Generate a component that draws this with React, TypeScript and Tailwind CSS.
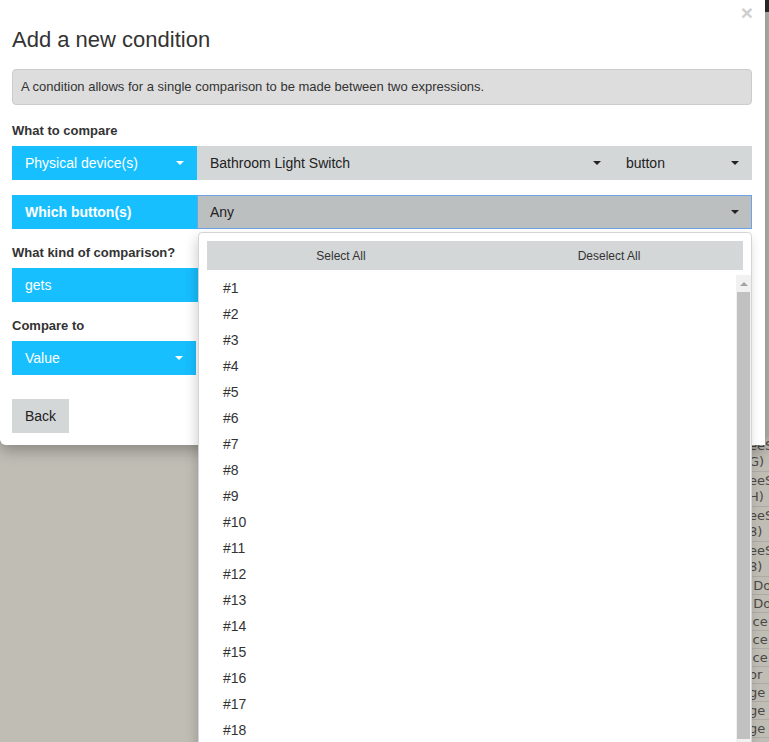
import React from 'react';

const buttonOptions = Array.from({ length: 18 }, (_, i) => `#${i + 1}`);

// fragments of the page underneath the modal, peeking out at the right edge
const behindCells = [
  { lines: ['eeS', 'G)'], h: 'h-[35px]' },
  { lines: ['eeS', 'H)'], h: 'h-[35px]' },
  { lines: ['eeS', '8)'], h: 'h-[35px]' },
  { lines: ['eeS', '8)'], h: 'h-[35px]' },
  { lines: ['\u00a0Do'], h: 'h-[18px]' },
  { lines: ['\u00a0Do'], h: 'h-[18px]' },
  { lines: ['ice'], h: 'h-[18px]' },
  { lines: ['ice'], h: 'h-[18px]' },
  { lines: ['ice'], h: 'h-[18px]' },
  { lines: ['or'], h: 'h-[17px]' },
  { lines: ['ge'], h: 'h-[18px]' },
  { lines: ['ge'], h: 'h-[18px]' },
  { lines: ['ge'], h: 'h-[18px]' },
];

function Caret({ white }: { white?: boolean }) {
  return (
    <span
      className={`inline-block h-0 w-0 border-x-[4px] border-t-[4px] border-x-transparent ${
        white ? 'border-t-white' : 'border-t-[#222]'
      }`}
    />
  );
}

export default function App() {
  return (
    <div className="relative flex h-[742px] w-full overflow-hidden bg-[#c0bdb5] font-['Liberation_Sans',Arial,sans-serif]">
      <div className="flex-1" />

      {/* underlying page, dimmed by the backdrop */}
      <div className="flex w-[17px] flex-col overflow-hidden font-['DejaVu_Sans',sans-serif] text-[13px] text-[#4b4a47]">
        <div className="h-[12px] shrink-0 bg-[#2a2a2a]" />
        <div className="h-[425px] shrink-0 bg-[#b9b7b1]" />
        {behindCells.map((cell, i) => (
          <div
            key={i}
            className={`flex ${cell.h} shrink-0 flex-col justify-center border-b border-[#adaba5] leading-[16px] -ml-[3px] whitespace-nowrap`}
          >
            {cell.lines.map((l, j) => (
              <span key={j}>{l}</span>
            ))}
          </div>
        ))}
      </div>

      {/* Modal */}
      <div className="absolute left-0 top-0 h-[445px] w-[765px] rounded-bl-[6px] bg-white pl-[12px] pr-[13px] text-[#333] shadow-[0_5px_15px_rgba(0,0,0,0.3)]">
        <button className="absolute right-[12px] top-[2px] text-[21px] font-bold leading-[21px] text-[#cfcfcf]">
          ×
        </button>

        <h4 className="pt-[28px] text-[22px] leading-[24px]">Add a new condition</h4>

        <div className="mt-[17px] flex h-[36px] items-center rounded-[4px] border border-[#cccccc] bg-[#dddddd] pl-[8px] text-[13px]">
          A condition allows for a single comparison to be made between two expressions.
        </div>

        <div className="mt-[17px] text-[13px] font-bold leading-[18px]">What to compare</div>
        <div className="mt-[6px] flex h-[34px] text-[14px]">
          <div className="flex w-[185px] items-center justify-between bg-[#17bfff] px-[13px] text-white">
            <span>Physical device(s)</span>
            <Caret white />
          </div>
          <div className="flex w-[416px] items-center justify-between bg-[#d4d7d8] pl-[13px] pr-[12px] text-[#222]">
            <span>Bathroom Light Switch</span>
            <Caret />
          </div>
          <div className="flex flex-1 items-center justify-between bg-[#d4d7d8] px-[13px] text-[#222]">
            <span>button</span>
            <Caret />
          </div>
        </div>

        <div className="mt-[15px] flex h-[34px] text-[14px]">
          <div className="flex w-[185px] items-center bg-[#17bfff] px-[13px] font-bold text-white">
            Which button(s)
          </div>
          <div className="relative flex flex-1">
            <div className="flex flex-1 items-center justify-between border border-[#6fa3e8] bg-[#bcbfc0] pl-[12px] pr-[12px] text-[#222]">
              <span>Any</span>
              <Caret />
            </div>

            {/* open dropdown */}
            <div className="absolute left-[1px] top-[37px] z-10 h-[540px] w-[554px] rounded-[4px] border border-[#d5d5d5] bg-white p-[8px] shadow-[-2px_6px_12px_rgba(0,0,0,0.175)]">
              <div className="flex h-[29px] bg-[#d4d7d8] text-[12px] text-[#333]">
                <button className="flex-1">Select All</button>
                <button className="flex-1">Deselect All</button>
              </div>
              <div className="-mr-[8px] mt-[5px] flex">
                <ul className="flex-1 pl-[16px]">
                  {buttonOptions.map((b) => (
                    <li key={b} className="flex h-[26px] items-center text-[14px] text-[#333]">
                      {b}
                    </li>
                  ))}
                </ul>
                <div className="flex w-[15px] flex-col bg-[#f1f1f1] px-[1px]">
                  <div className="flex h-[17px] items-center justify-center">
                    <span className="h-0 w-0 border-x-[4px] border-b-[4px] border-x-transparent border-b-[#a3a3a3]" />
                  </div>
                  <div className="h-[447px] bg-[#c1c1c1]" />
                </div>
              </div>
            </div>
          </div>
        </div>

        <div className="mt-[15px] text-[13px] font-bold leading-[18px]">What kind of comparison?</div>
        <div className="mt-[6px] flex h-[34px] items-center bg-[#17bfff] px-[13px] text-[14px] text-white">
          gets
        </div>

        <div className="mt-[15px] text-[13px] font-bold leading-[18px]">Compare to</div>
        <div className="mt-[6px] flex h-[34px] text-[14px]">
          <div className="flex w-[184px] items-center justify-between bg-[#17bfff] px-[13px] text-white">
            <span>Value</span>
            <Caret white />
          </div>
          <div className="flex-1" />
        </div>

        <div className="mt-[24px] flex h-[34px] justify-between text-[14px]">
          <button className="w-[57px] bg-[#d4d7d8] text-[#222]">Back</button>
          <button className="w-[80px] bg-[#17bfff] text-white">Save</button>
        </div>
      </div>
    </div>
  );
}
